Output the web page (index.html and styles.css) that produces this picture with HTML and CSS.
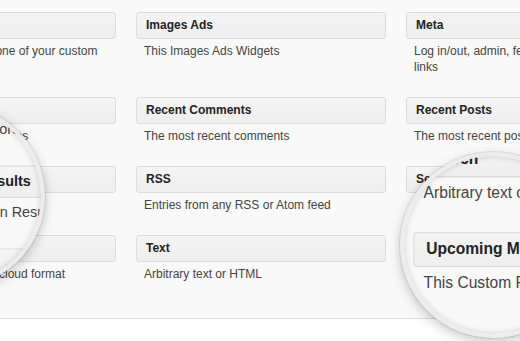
FILE: index.html
```html
<!DOCTYPE html>
<html lang="en">
<head>
  <meta charset="UTF-8" />
  <meta name="viewport" content="width=device-width, initial-scale=1.0" />
  <title>Available Widgets</title>
  <link rel="stylesheet" href="styles.css">
</head>
<body>
  <div class="screen">
    <div class="panel">
      <div class="widgets">
        <div class="widget">
          <div class="widget-title">Custom Menu</div>
          <div class="widget-desc">Use this widget to add one of your custom menus as a widget.</div>
        </div>
        <div class="widget">
          <div class="widget-title">Images Ads</div>
          <div class="widget-desc">This Images Ads Widgets</div>
        </div>
        <div class="widget">
          <div class="widget-title">Meta</div>
          <div class="widget-desc">Log in/out, admin, feed and WordPress.org links</div>
        </div>

        <div class="widget">
          <div class="widget-title">Pages</div>
          <div class="widget-desc">Your site's WordPress Pages</div>
        </div>
        <div class="widget">
          <div class="widget-title">Recent Comments</div>
          <div class="widget-desc">The most recent comments</div>
        </div>
        <div class="widget">
          <div class="widget-title">Recent Posts</div>
          <div class="widget-desc">The most recent posts on your site</div>
        </div>

        <div class="widget">
          <div class="widget-title">Election Results</div>
          <div class="widget-desc">Show Election Results</div>
        </div>
        <div class="widget">
          <div class="widget-title">RSS</div>
          <div class="widget-desc">Entries from any RSS or Atom feed</div>
        </div>
        <div class="widget">
          <div class="widget-title">Search</div>
          <div class="widget-desc">Arbitrary text or HTML</div>
        </div>

        <div class="widget">
          <div class="widget-title">Tag Cloud</div>
          <div class="widget-desc">Your most used tags in cloud format</div>
        </div>
        <div class="widget">
          <div class="widget-title">Text</div>
          <div class="widget-desc">Arbitrary text or HTML</div>
        </div>
        <div class="widget">
          <div class="widget-title">Upcoming Movies</div>
          <div class="widget-desc">This Custom Results Widget</div>
        </div>
      </div>
    </div>

    <!-- magnifier glasses, filled with a copy of the panel -->
    <div class="lens lens-left"><div class="lens-view"></div></div>
    <div class="lens lens-right"><div class="lens-view"></div></div>
  </div>

  <script>
    document.addEventListener('DOMContentLoaded', () => {
      const panel = document.querySelector('.panel');
      document.querySelectorAll('.lens-view').forEach(view => {
        const copy = panel.cloneNode(true);
        copy.setAttribute('aria-hidden', 'true');
        view.appendChild(copy);
      });
    });
  </script>
</body>
</html>
```

FILE: styles.css
```css
:root {
  --panel-bg: #f9f9f9;
  --box-border: #dcdcdc;
  --title-color: #222222;
  --desc-color: #444444;
  --font-family-ui: 'Liberation Sans', Arial, sans-serif;
}

body {
  margin: 0;
  background: #ffffff;
  font-family: var(--font-family-ui);
  overflow: hidden;
}

.screen {
  position: relative;
  width: 520px;
  height: 341px;
  overflow: hidden;
}

.panel {
  height: 319px;
  box-sizing: border-box;
  padding-top: 12px;
  background: var(--panel-bg);
  border-bottom: 1px solid #dddddd;
}

.widgets {
  display: grid;
  grid-template-columns: repeat(3, 250px);
  column-gap: 20px;
  row-gap: 22px;
  margin-left: -134px;
  width: 790px;
}

.widget-title {
  height: 27px;
  box-sizing: border-box;
  padding: 0 9px;
  border: 1px solid var(--box-border);
  border-radius: 3px;
  background: linear-gradient(#f4f4f4, #eeeeee);
  color: var(--title-color);
  font-size: 12px;
  font-weight: bold;
  line-height: 25px;
  white-space: nowrap;
}

.widget-desc {
  margin-top: 4px;
  padding: 0 8px;
  color: var(--desc-color);
  font-size: 12px;
  line-height: 16px;
}

/* magnifier */
.lens {
  position: absolute;
  border-radius: 50%;
  overflow: hidden;
  border: 4px solid #ececec;
  box-shadow: 0 0 0 1px rgba(0, 0, 0, 0.08), 0 4px 12px rgba(0, 0, 0, 0.22);
  background: var(--panel-bg);
}

.lens::after {
  content: '';
  position: absolute;
  inset: 0;
  border-radius: 50%;
  box-shadow: inset 0 0 6px rgba(0, 0, 0, 0.18);
  pointer-events: none;
}

.lens-view {
  position: absolute;
  width: 520px;
  height: 341px;
  background: #ffffff;
}

.lens-left {
  left: -139px;
  top: 104px;
  width: 176px;
  height: 176px;
}

.lens-left .lens-view {
  left: 135px;
  top: -108px;
  transform: scale(1.2);
  transform-origin: -338px 168px;
}

.lens-right {
  left: 400px;
  top: 152px;
  width: 178px;
  height: 178px;
}

.lens-right .lens-view {
  left: -404px;
  top: -156px;
  transform: scale(1.3);
  transform-origin: 382px 245px;
}
```
